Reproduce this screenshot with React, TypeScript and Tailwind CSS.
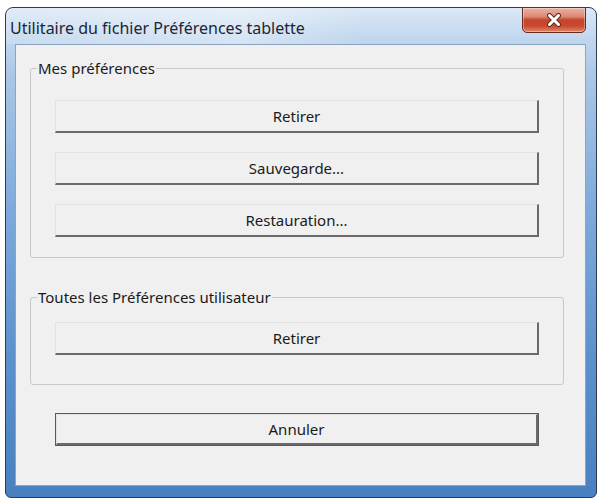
import React from "react";

function Btn({ label, isDefault = false }: { label: string; isDefault?: boolean }) {
  return (
    <div
      className={
        isDefault
          ? "w-[484px] h-[33px] border border-[#5a5a5a] bg-[#f0f0f0] flex"
          : "w-[484px] h-[33px] flex"
      }
    >
      <div className="flex-1 border-t border-l border-t-[#e2e2e2] border-l-[#e2e2e2] border-r-2 border-b-2 border-r-[#6a6a6a] border-b-[#6a6a6a] bg-[#f0f0f0] flex items-center justify-center text-[15px] text-[#1a1a1a]">
        {label}
      </div>
    </div>
  );
}

function Group({ title, children, className = "" }: { title: string; children: React.ReactNode; className?: string }) {
  return (
    <fieldset
      className={
        "w-[534px] border border-[#c8c8c8] rounded-[3px] pl-[24px] " + className
      }
    >
      <legend className="ml-[-18px] px-[1px] text-[15px] leading-[18px] text-[#1a1a1a]">{title}</legend>
      {children}
    </fieldset>
  );
}

export default function App() {
  return (
    <div
      className="w-[598px] h-[501px] bg-white pt-[7px] pl-[5px]"
      style={{ fontFamily: '"Noto Sans", "Open Sans", Arial, sans-serif' }}
    >
      <div className="relative w-[592px] h-[491px] rounded-t-[8px] rounded-b-[6px] border border-[#2d3c52] flex flex-col bg-[linear-gradient(to_bottom,#dbe8f6_0px,#c2d7ee_30px,#a9c6e6_70px,#7eaadb_200px,#5c91cc_350px,#4a80c0_100%)]">
        {/* Title bar */}
        <div className="h-[36px] flex items-center pl-[4px] bg-[linear-gradient(to_right,rgba(255,255,255,0.15),rgba(255,255,255,0.35)_40%,rgba(255,255,255,0)_60%)] rounded-t-[7px]">
          <span className="text-[16px] text-[#1b2636] mt-[4px]">Utilitaire du fichier Préférences tablette</span>
        </div>
        {/* Close button */}
        <div className="absolute top-[-1px] right-[10px] w-[64px] h-[26px] rounded-b-[5px] border border-[#6b2a20] bg-[linear-gradient(to_bottom,#eab2a3_0%,#dc8a76_35%,#c5432a_50%,#c94a30_75%,#e08a6a_100%)] flex items-center justify-center shadow-[inset_0_0_0_1px_rgba(255,255,255,0.35)]">
          <svg width="16" height="14" viewBox="0 0 16 14">
            <path d="M3.5 2.5 L12.5 11.5 M12.5 2.5 L3.5 11.5" stroke="#6a2b22" strokeWidth="5" strokeLinecap="round" />
            <path d="M3.5 2.5 L12.5 11.5 M12.5 2.5 L3.5 11.5" stroke="#ffffff" strokeWidth="3" strokeLinecap="round" />
          </svg>
        </div>
        {/* Client area */}
        <div className="ml-[9px] mr-[10px] h-[442px] border border-[#8aa4c2] bg-[#f0f0f0] pl-[14px] pt-[14px] flex flex-col">
          <Group title="Mes préférences" className="pt-[23px] pb-[20px]">
            <div className="flex flex-col gap-[19px]">
              <Btn label="Retirer" />
              <Btn label="Sauvegarde..." />
              <Btn label="Restauration..." />
            </div>
          </Group>
          <Group title="Toutes les Préférences utilisateur" className="mt-[30px] pt-[16px] pb-[29px]">
            <Btn label="Retirer" />
          </Group>
          <div className="mt-[28px] pl-[25px]">
            <Btn label="Annuler" isDefault />
          </div>
        </div>
      </div>
    </div>
  );
}
